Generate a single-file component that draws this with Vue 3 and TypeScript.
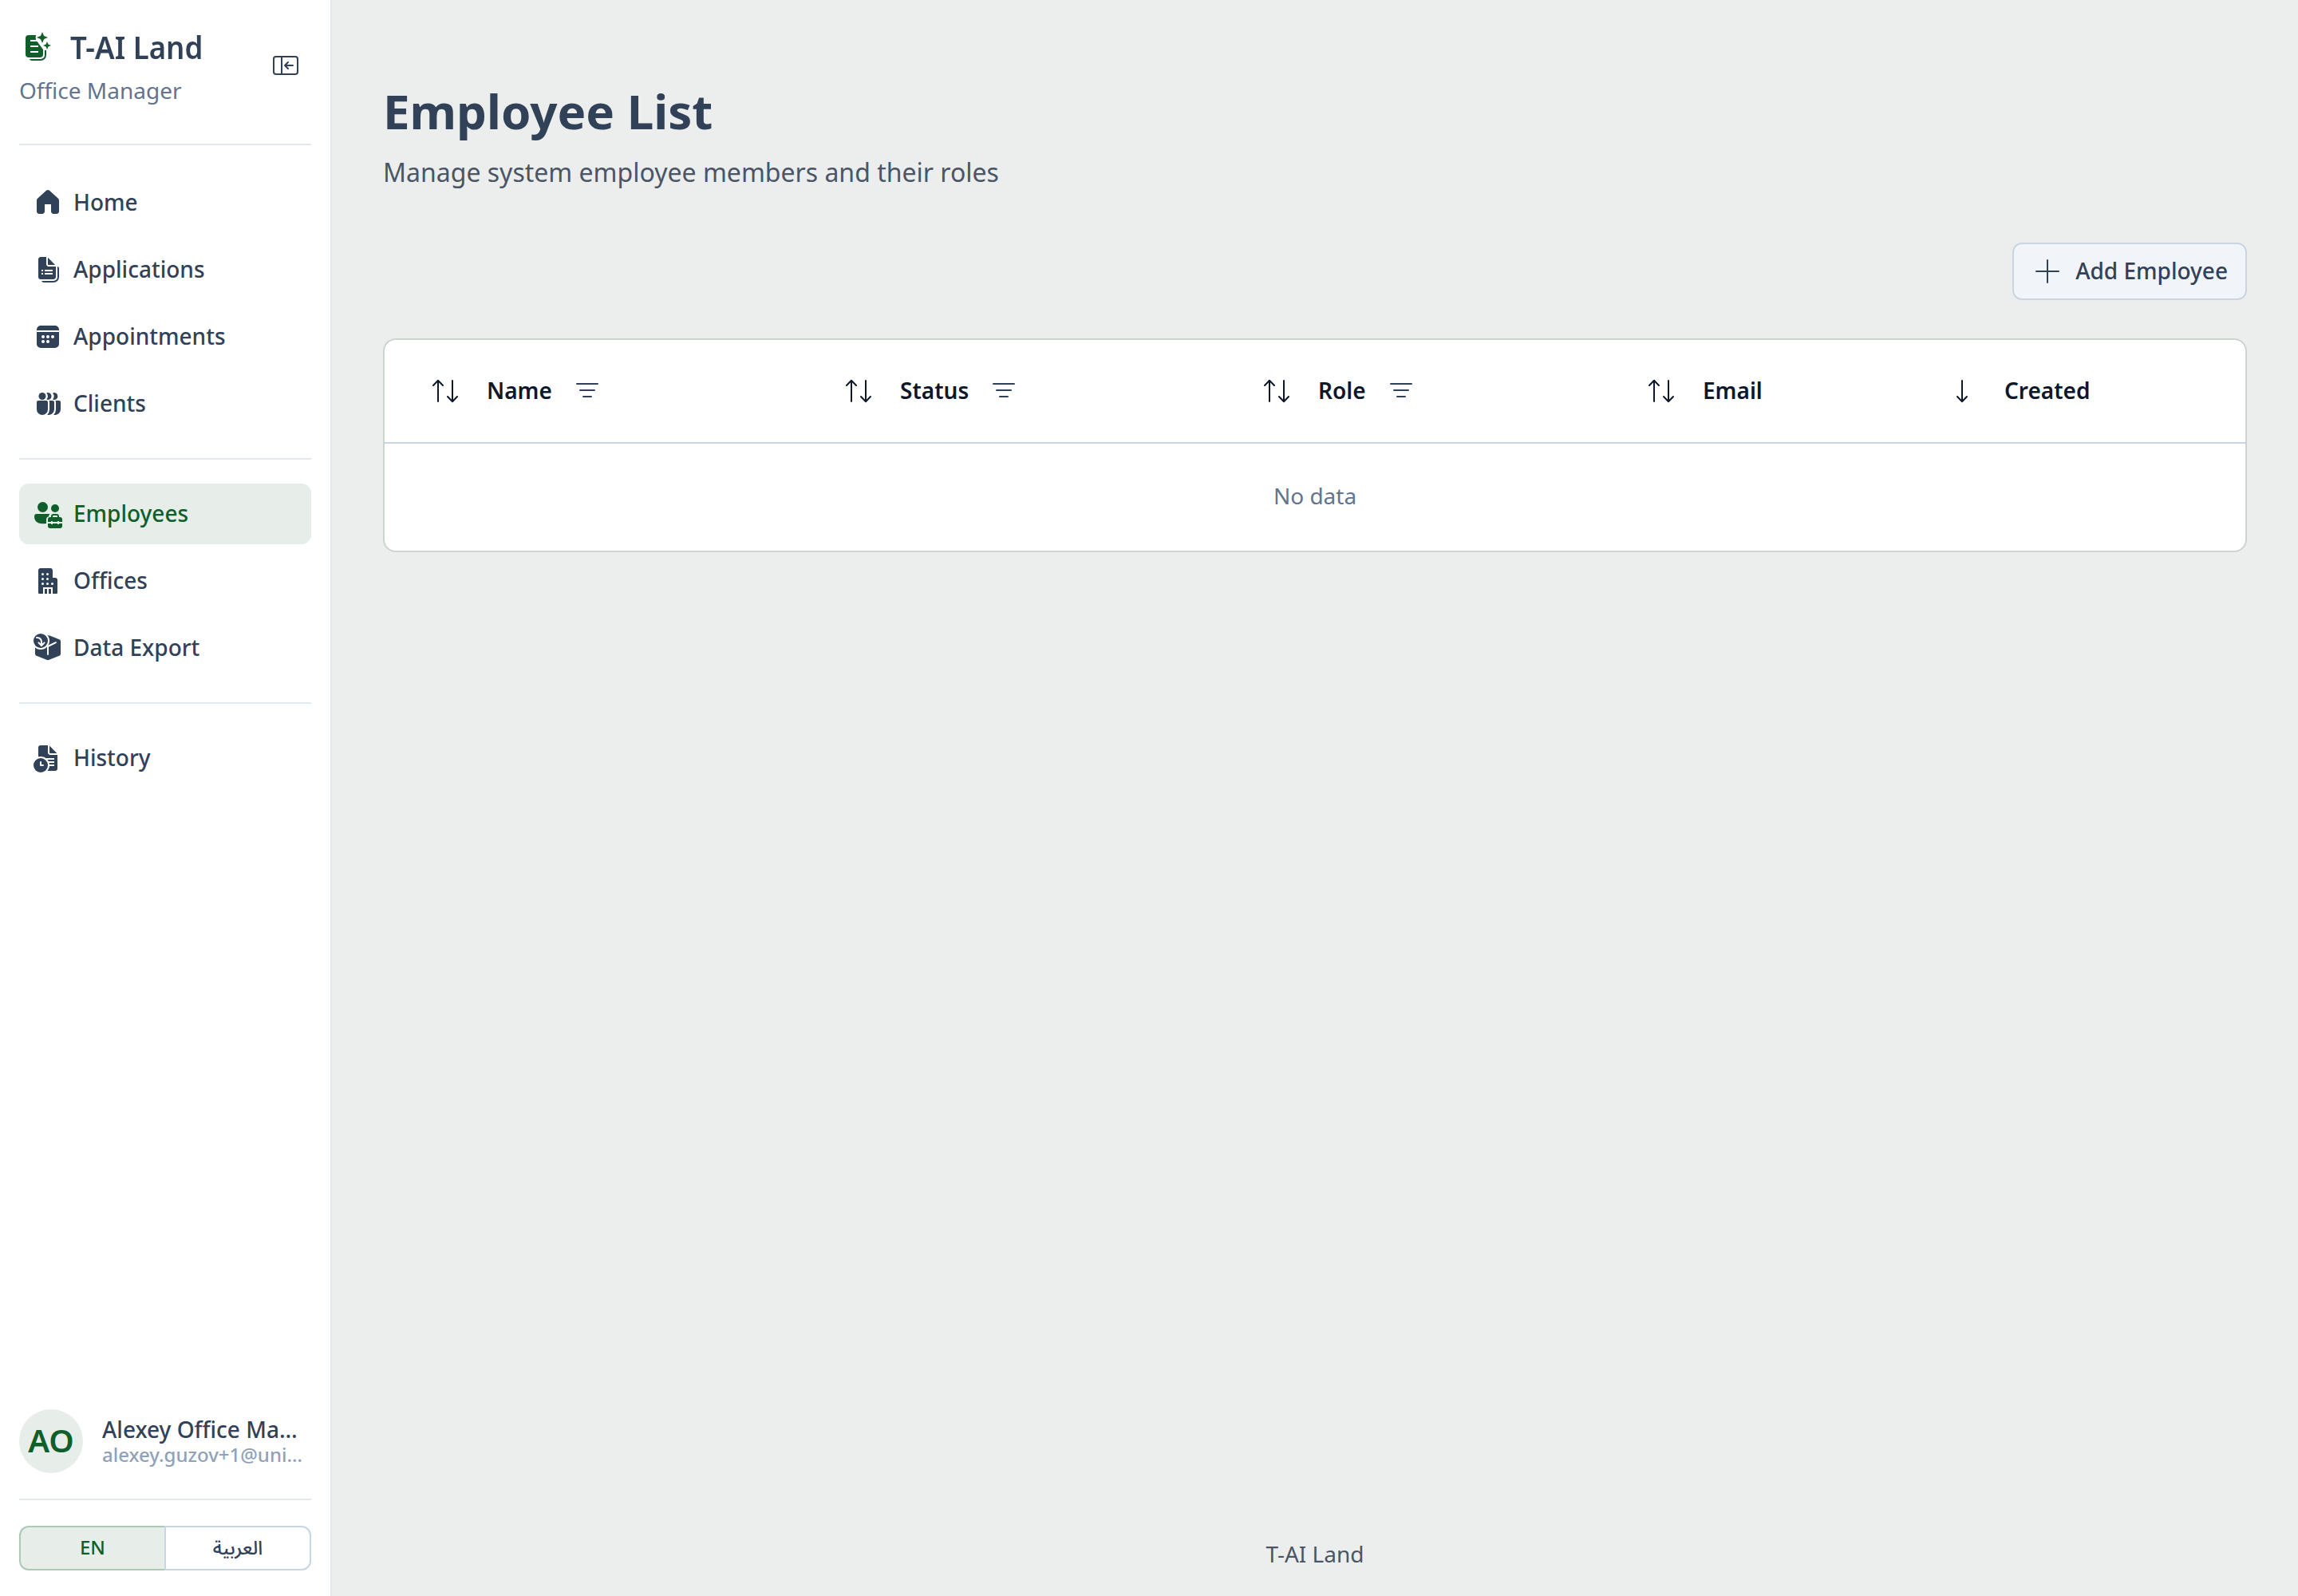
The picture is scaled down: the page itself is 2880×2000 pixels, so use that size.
<script setup lang="ts">
interface NavItem {
  id: string
  label: string
  active?: boolean
}

interface Column {
  label: string
  sort: 'both' | 'down'
  filter: boolean
}

const groups: NavItem[][] = [
  [
    { id: 'home', label: 'Home' },
    { id: 'applications', label: 'Applications' },
    { id: 'appointments', label: 'Appointments' },
    { id: 'clients', label: 'Clients' },
  ],
  [
    { id: 'employees', label: 'Employees', active: true },
    { id: 'offices', label: 'Offices' },
    { id: 'export', label: 'Data Export' },
  ],
  [{ id: 'history', label: 'History' }],
]

const columns: Column[] = [
  { label: 'Name', sort: 'both', filter: true },
  { label: 'Status', sort: 'both', filter: true },
  { label: 'Role', sort: 'both', filter: true },
  { label: 'Email', sort: 'both', filter: false },
  { label: 'Created', sort: 'down', filter: false },
]
</script>

<template>
  <div class="app">
    <aside class="sidebar">
      <header class="brand">
        <div class="brand-text">
          <div class="brand-row">
            <svg class="icon logo" viewBox="0 0 20 20">
              <mask id="logo-cut">
                <rect width="20" height="20" fill="#fff" />
                <circle cx="14.3" cy="3.5" r="4" fill="#000" />
                <path d="M12 7l3.200 4.200L18 11V5h-6z" fill="#000" />
                <path d="M7 5.500h4M7 9h5M7 12.500h5" stroke="#000" stroke-width="1" />
              </mask>
              <path mask="url(#logo-cut)" d="M6 2h7a2 2 0 0 1 2 2v10a2 2 0 0 1-2 2H6a2 2 0 0 1-2-2V4a2 2 0 0 1 2-2z" />
              <path d="M16 11.500h1v3a3.500 3.500 0 0 1-3.500 3.500H8a2 2 0 0 1-1.700-1H13.500a2.500 2.500 0 0 0 2.500-2.500z" />
              <path d="M14.500 0l.85 2.100a1 1 0 0 0 .55.550L18 3.500l-2.100.85a1 1 0 0 0-.55.550L14.500 7l-.85-2.100a1 1 0 0 0-.55-.550L11 3.500l2.100-.85a1 1 0 0 0 .55-.550z" />
              <path d="M17.500 6l.6 1.500a.7.7 0 0 0 .4.400L20 8.500l-1.500.6a.7.7 0 0 0-.4.400L17.500 11l-.6-1.500a.7.7 0 0 0-.4-.400L15 8.500l1.500-.6a.7.7 0 0 0 .4-.400z" />
            </svg>
            <span class="brand-name">T-AI Land</span>
          </div>
          <div class="brand-role">Office Manager</div>
        </div>
        <svg class="icon collapse" viewBox="0 0 20 20" fill="none" stroke="currentColor">
          <rect x="2.500" y="4.500" width="15" height="11" rx="1.500" />
          <path d="M7.500 4.500v11" />
          <path d="M14.500 10h-5M11.500 8l-2 2 2 2" stroke-linecap="round" stroke-linejoin="round" />
        </svg>
      </header>

      <nav>
        <div v-for="(group, gi) in groups" :key="gi" class="group">
          <a v-for="item in group" :key="item.id" class="item" :class="{ active: item.active }">
            <svg v-if="item.id === 'home'" class="icon" viewBox="0 0 20 20">
              <path d="M11 2.390a1.500 1.500 0 0 0-2 0l-5.500 4.940A1.500 1.500 0 0 0 3 8.440v7.060C3 16.330 3.670 17 4.500 17h2c.83 0 1.500-.67 1.500-1.500V11h4v4.500c0 .83.67 1.500 1.500 1.500h2c.83 0 1.500-.67 1.500-1.500V8.440c0-.42-.18-.83-.5-1.110z" />
            </svg>
            <svg v-else-if="item.id === 'applications'" class="icon" viewBox="0 0 20 20">
              <path fill-rule="evenodd" d="M9 2v4.500C9 7.330 9.670 8 10.500 8H15v6.500c0 .83-.67 1.500-1.500 1.500h-8A1.500 1.500 0 0 1 4 14.500v-11C4 2.670 4.670 2 5.500 2zM6 10v1h1v-1zm0 2v1h1v-1zm2-2v1h5v-1zm0 2v1h5v-1z" />
              <path d="M10 2.400 14.600 7h-4.100a.5.5 0 0 1-.5-.5z" />
              <path d="M16 8c.6.200 1 .5 1 1v5.500a3.500 3.500 0 0 1-3.500 3.500H7.500c-.7 0-1.200-.4-1.500-1h7.500a2.500 2.500 0 0 0 2.500-2.500z" />
            </svg>
            <svg v-else-if="item.id === 'appointments'" class="icon" viewBox="0 0 20 20">
              <path d="M3 6V5.500A2.500 2.500 0 0 1 5.500 3h9A2.500 2.500 0 0 1 17 5.500V6z" />
              <path fill-rule="evenodd" d="M3 7h14v7.500a2.500 2.500 0 0 1-2.500 2.500h-9A2.500 2.500 0 0 1 3 14.500zm4 2a1 1 0 1 0 0 2 1 1 0 0 0 0-2zm3 0a1 1 0 1 0 0 2 1 1 0 0 0 0-2zm3 0a1 1 0 1 0 0 2 1 1 0 0 0 0-2zm-6 3a1 1 0 1 0 0 2 1 1 0 0 0 0-2zm3 0a1 1 0 1 0 0 2 1 1 0 0 0 0-2z" />
            </svg>
            <svg v-else-if="item.id === 'clients'" class="icon" viewBox="0 0 20 20">
              <circle cx="6.500" cy="5.250" r="2.250" />
              <path d="M4 8h5a1 1 0 0 1 1 1v4.500a3.500 3.500 0 0 1-7 0V9a1 1 0 0 1 1-1z" />
              <path d="M9.100 7.300a3.250 3.250 0 0 0 0-4.100 2.250 2.250 0 1 1 0 4.100z" />
              <path d="M13 7.300a3.250 3.250 0 0 0 0-4.100 2.250 2.250 0 1 1 0 4.100z" />
              <path d="M10.730 8H13a1 1 0 0 1 1 1v4.500a3.500 3.500 0 0 1-4.400 3.390A4.500 4.500 0 0 0 11 13.500V9c0-.36-.1-.7-.27-1z" />
              <path d="M14.730 8H17a1 1 0 0 1 1 1v4.500a3.500 3.500 0 0 1-4.400 3.390A4.500 4.500 0 0 0 15 13.500V9c0-.36-.1-.7-.27-1z" />
            </svg>
            <svg v-else-if="item.id === 'employees'" class="icon" viewBox="0 0 20 20">
              <circle cx="6.750" cy="5.750" r="3.250" />
              <circle cx="14.500" cy="6.500" r="2.500" />
              <path d="M3 10h7.500c.3 0 .5.100.7.200-.5.300-.7.800-.7 1.400-.9.200-1.500 1-1.500 1.900V16c-.7.100-1.500.1-2.200.1-4 0-5.300-2.200-5.300-4.600A1.500 1.500 0 0 1 3 10z" />
              <path fill-rule="evenodd" d="M12 12v-.5a1.500 1.500 0 0 1 1.500-1.500h2a1.500 1.500 0 0 1 1.500 1.500v.5h.5a1.500 1.500 0 0 1 1.500 1.500V15h-2v-.5h-1v.5h-3v-.5h-1v.5h-2v-1.500a1.500 1.500 0 0 1 1.500-1.500zm1 0h3v-.5a.5.5 0 0 0-.5-.5h-2a.5.5 0 0 0-.5.500z" />
              <path d="M10 16h2v.5h1V16h3v.5h1V16h2v1.500a1.500 1.500 0 0 1-1.500 1.500h-6a1.500 1.500 0 0 1-1.500-1.500z" />
            </svg>
            <svg v-else-if="item.id === 'offices'" class="icon" viewBox="0 0 20 20">
              <path fill-rule="evenodd" d="M5.500 2h6A1.500 1.500 0 0 1 13 3.500V8h1.500A1.500 1.500 0 0 1 16 9.500v8a.5.5 0 0 1-.5.500H13v-4H7v4H4.500a.5.5 0 0 1-.5-.5v-14A1.500 1.500 0 0 1 5.500 2zm1.250 3a.75.75 0 1 0 0 1.500.75.75 0 0 0 0-1.500zm3 0a.75.75 0 1 0 0 1.500.75.75 0 0 0 0-1.500zm-3 3a.75.75 0 1 0 0 1.500.75.75 0 0 0 0-1.500zm3 0a.75.75 0 1 0 0 1.500.75.75 0 0 0 0-1.500zm-3 3a.75.75 0 1 0 0 1.500.75.75 0 0 0 0-1.500zm3 0a.75.75 0 1 0 0 1.500.75.75 0 0 0 0-1.500zm3 0a.75.75 0 1 0 0 1.500.75.75 0 0 0 0-1.500z" />
              <path d="M8 15h1.500v3H8zM10.500 15H12v3h-1.500z" />
            </svg>
            <svg v-else-if="item.id === 'export'" class="icon" viewBox="0 0 20 20">
              <mask id="box-cut">
                <rect width="20" height="20" fill="#fff" />
                <circle cx="5.500" cy="5.500" r="5.500" fill="#000" />
                <path d="M10 14V9l5-2.400M10 9 8.500 8.300" fill="none" stroke="#000" stroke-width="1" stroke-linecap="round" />
              </mask>
              <path mask="url(#box-cut)" d="M9 2l2.200.3 5.900 2.300c.6.200.9.700.9 1.300v7.700c0 .6-.3 1.100-.9 1.300l-6.200 2.500c-.6.300-1.200.3-1.800 0l-6.200-2.500c-.6-.2-.9-.7-.9-1.300V6z" />
              <circle cx="5.500" cy="5.500" r="4.500" />
              <path d="M3 3.500c2 0 3 1.200 3 3v1.800M4.200 6.700 6 8.500l1.800-1.800" fill="none" stroke="#fff" stroke-width="1" stroke-linecap="round" stroke-linejoin="round" />
            </svg>
            <svg v-else class="icon" viewBox="0 0 20 20">
              <mask id="doc-cut">
                <rect width="20" height="20" fill="#fff" />
                <circle cx="5.500" cy="14.500" r="5.500" fill="#000" />
                <path d="M9 10.500h5M10 12.500h4M10.500 14.500H14" stroke="#000" stroke-width="1" />
              </mask>
              <path mask="url(#doc-cut)" d="M5.500 2H10v4.500c0 .83.67 1.500 1.500 1.500H16v8.500a1.500 1.500 0 0 1-1.500 1.500H4V3.500A1.500 1.500 0 0 1 5.500 2z" />
              <path d="M11 2.300 15.700 7h-4.200a.5.5 0 0 1-.5-.5z" />
              <circle cx="5.500" cy="14.500" r="4.500" />
              <path d="M5.500 12.500v2h1.500" fill="none" stroke="#fff" stroke-width="1" stroke-linecap="round" stroke-linejoin="round" />
            </svg>
            <span class="label">{{ item.label }}</span>
          </a>
        </div>
      </nav>

      <div class="user">
        <div class="avatar">AO</div>
        <div class="user-text">
          <div class="user-name">Alexey Office Ma…</div>
          <div class="user-email">alexey.guzov+1@uni…</div>
        </div>
      </div>

      <div class="lang">
        <button class="lang-btn selected">EN</button>
        <button class="lang-btn" lang="ar">العربية</button>
      </div>
    </aside>

    <main class="main">
      <h1>Employee List</h1>
      <p class="subtitle">Manage system employee members and their roles</p>

      <div class="toolbar">
        <button class="add">
          <svg class="icon" viewBox="0 0 20 20" fill="none" stroke="currentColor" stroke-linecap="round">
            <path d="M10 3v14M3 10h14" />
          </svg>
          <span class="label">Add Employee</span>
        </button>
      </div>

      <section class="table">
        <div class="thead">
          <div v-for="col in columns" :key="col.label" class="th">
            <svg v-if="col.sort === 'both'" class="icon" viewBox="0 0 20 20" fill="none" stroke="currentColor" stroke-linecap="round" stroke-linejoin="round">
              <path d="M5.500 16.500v-13M2.500 6.500l3-3.100 3 3.100M14.500 3.500v13M11.500 13.500l3 3.100 3-3.100" />
            </svg>
            <svg v-else class="icon" viewBox="0 0 20 20" fill="none" stroke="currentColor" stroke-linecap="round" stroke-linejoin="round">
              <path d="M9.500 3.500v13M6.500 13.500l3 3.100 3-3.100" />
            </svg>
            <span class="th-label label">{{ col.label }}</span>
            <svg v-if="col.filter" class="icon filter" viewBox="0 0 20 20" fill="none" stroke="currentColor" stroke-linecap="round">
              <path d="M3.500 5.500h13M5.500 9.500h9M7.500 13.500h5" />
            </svg>
          </div>
        </div>
        <div class="empty">No data</div>
      </section>

      <footer class="footer">T-AI Land</footer>
    </main>
  </div>
</template>

<style>
body {
  margin: 0;
}
</style>

<style scoped>
.app {
  display: flex;
  width: 2880px;
  height: 2000px;
  overflow: hidden;
  background: #eceeed;
  color: #314158;
  font-family: 'Noto Sans', 'Noto Sans Arabic', sans-serif;
  font-size: 28px;
  line-height: 40px;
}

.app * {
  box-sizing: border-box;
}

.icon {
  display: block;
  flex: none;
  width: 40px;
  height: 40px;
}

svg.icon:not([fill]) {
  fill: currentColor;
}

.label {
  padding-bottom: 2px;
}

.sidebar {
  display: flex;
  flex-direction: column;
  flex: none;
  box-sizing: border-box;
  width: 416px;
  padding: 0 24px 32px;
  background: #fff;
  border-right: 2px solid #e2e8f0;
}

.brand {
  display: flex;
  align-items: flex-start;
  justify-content: space-between;
  height: 182px;
  border-bottom: 2px solid #e2e8f0;
}

.brand-row {
  display: flex;
  align-items: center;
  gap: 24px;
  height: 56px;
  margin-top: 32px;
}

.logo {
  color: #105f2b;
}

.brand-name {
  align-self: flex-start;
  font-size: 40px;
  font-weight: 600;
  line-height: 53px;
  transform: scaleX(0.915);
  transform-origin: left center;
}

.brand-role {
  margin-top: 5px;
  color: #62748e;
}

.collapse {
  margin: 62px 12px 0 0;
}

nav {
  flex: 1;
  padding-top: 4px;
}

.group {
  display: flex;
  flex-direction: column;
  gap: 8px;
  padding: 30px 0;
}

.group + .group {
  border-top: 2px solid #e2e8f0;
}

.item {
  display: flex;
  align-items: center;
  gap: 12px;
  height: 76px;
  padding: 0 16px;
  border-radius: 12px;
  font-weight: 500;
}

.item.active {
  background: #e7ede9;
  color: #105f2b;
}

.user {
  display: flex;
  align-items: center;
  gap: 24px;
  height: 114px;
  padding-bottom: 32px;
  border-bottom: 2px solid #e2e8f0;
}

.avatar {
  display: flex;
  align-items: center;
  justify-content: center;
  flex: none;
  width: 80px;
  height: 80px;
  padding-bottom: 2px;
  border-radius: 50%;
  background: #e7ede9;
  color: #105f2b;
  font-size: 40px;
  font-weight: 600;
}

.user-text {
  padding-top: 2px;
  font-weight: 500;
  white-space: nowrap;
  line-height: 32px;
}

.user-email {
  color: #90a1b9;
  font-size: 24px;
}

.lang {
  display: flex;
  height: 56px;
  margin-top: 32px;
}

.lang-btn {
  flex: 1;
  padding: 0 0 2px;
  border: 2px solid #cad5e2;
  border-radius: 0 12px 12px 0;
  background: #fff;
  color: #314158;
  font: 500 24px/32px 'Noto Sans', 'Noto Sans Arabic', sans-serif;
}

.lang-btn.selected {
  flex: none;
  width: 182px;
  border-color: #adc8b7;
  border-right: 0;
  border-radius: 12px 0 0 12px;
  background: #e7ede9;
  color: #105f2b;
}

.main {
  display: flex;
  flex-direction: column;
  flex: 1;
  padding: 99px 64px 20px;
}

h1 {
  margin: 0;
  font-size: 60px;
  font-weight: 700;
  line-height: 80px;
}

.subtitle {
  margin: 14px 0 0;
  color: #4a5565;
  font-size: 32px;
  line-height: 46px;
}

.toolbar {
  display: flex;
  justify-content: flex-end;
  margin-top: 65px;
}

.add {
  display: flex;
  align-items: center;
  gap: 15px;
  height: 72px;
  padding: 0 22px;
  border: 2px solid #cad5e2;
  border-radius: 12px;
  background: #f1f5f9;
  color: #314158;
  font: 500 28px/40px 'Noto Sans', sans-serif;
}

.table {
  margin-top: 48px;
  border: 2px solid #cbd5ce;
  border-radius: 16px;
  background: #fff;
}

.thead {
  display: grid;
  grid-template-columns: 518px 524px 482px 378px 1fr;
  height: 130px;
  border-bottom: 2px solid #cad5e2;
  color: #0f172b;
  font-weight: 600;
}

.th {
  display: flex;
  align-items: center;
  padding-left: 56px;
}

.th-label {
  margin-left: 32px;
}

.filter {
  margin-left: 24px;
  color: #314158;
}

.empty {
  height: 134px;
  color: #62748e;
  line-height: 130px;
  text-align: center;
}

.footer {
  margin-top: auto;
  padding-bottom: 13px;
  color: #4a5565;
  text-align: center;
}
</style>
